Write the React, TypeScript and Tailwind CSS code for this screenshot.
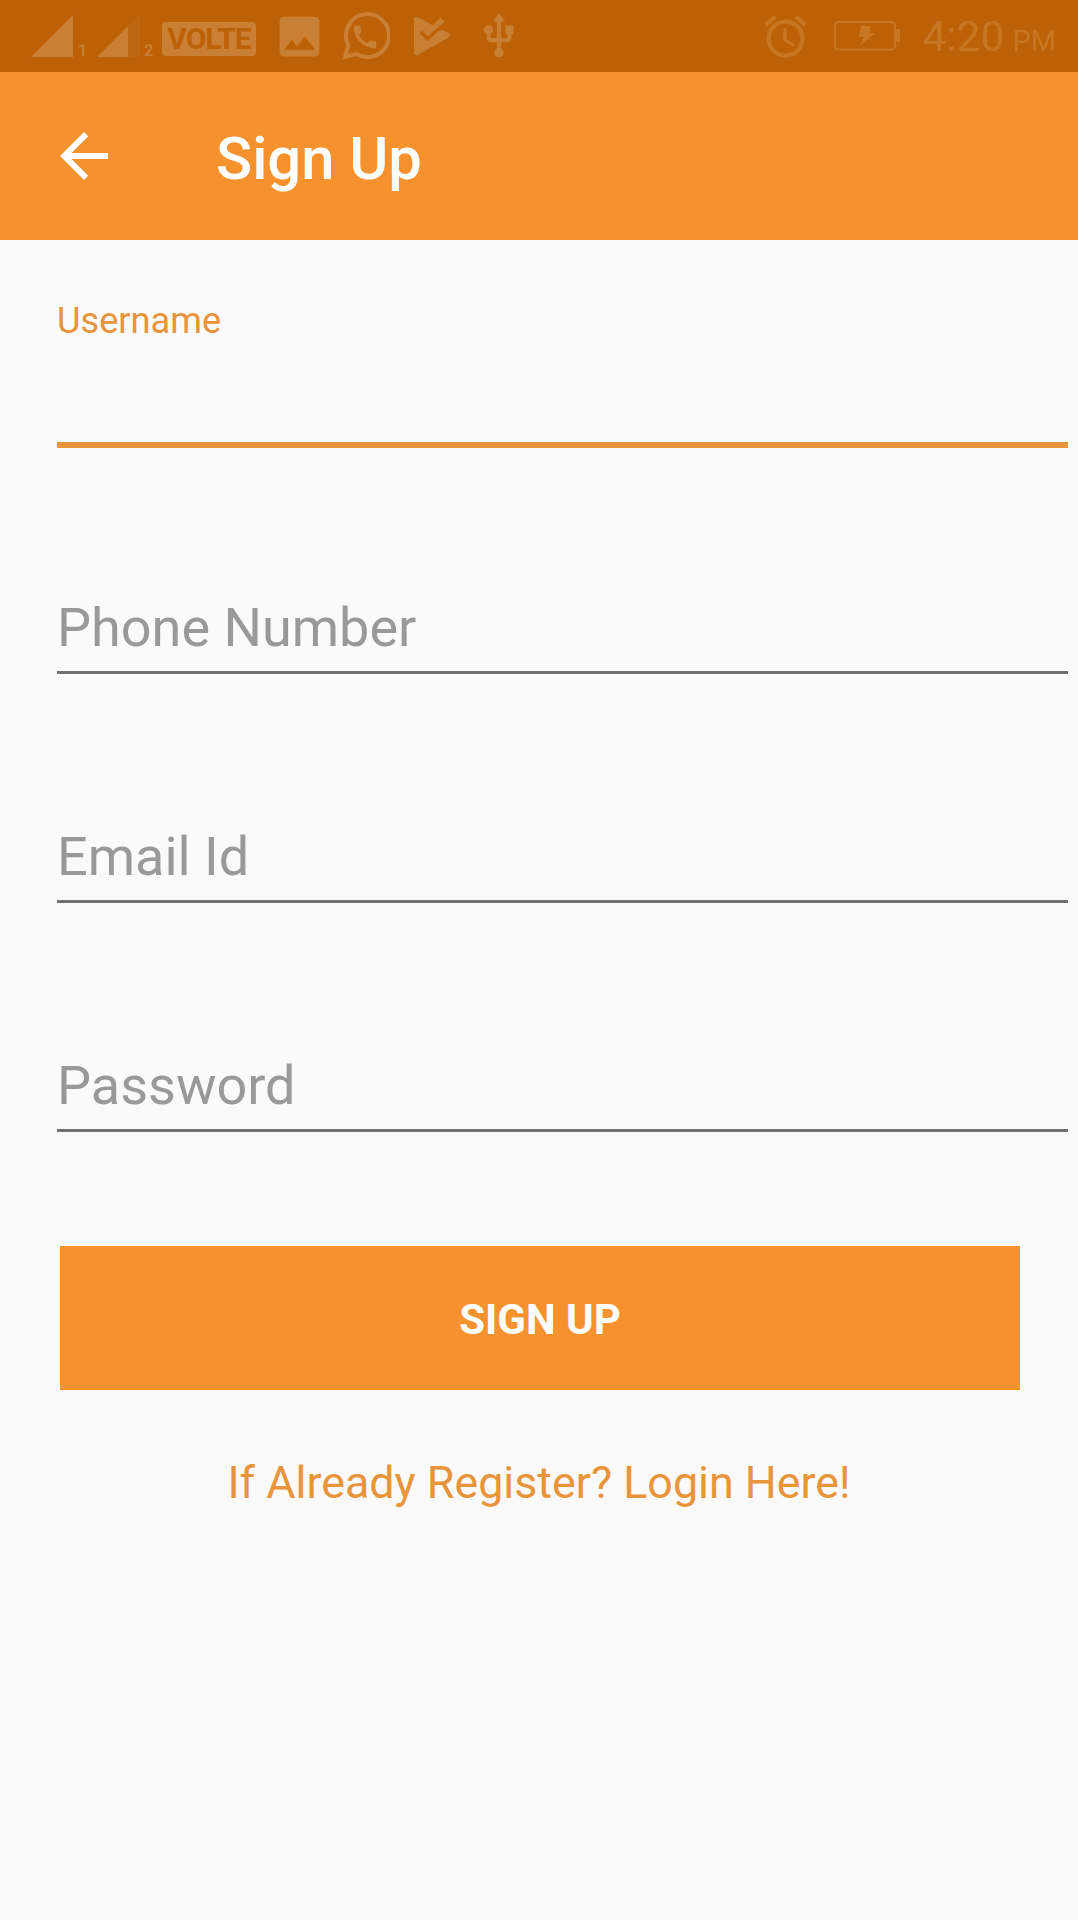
import React from "react"
import { MdAlarm, MdArrowBack, MdCall, MdImage, MdUsb } from "react-icons/md"

interface Field {
  label: string
  height: string
}

const fields: Field[] = [
  { label: "Phone Number", height: "h-[226px]" },
  { label: "Email Id", height: "h-[229px]" },
  { label: "Password", height: "h-[229px]" },
]

function SignalFull() {
  return (
    <svg className="ml-[31px] h-[42px] w-[42px]" viewBox="0 0 42 42" fill="currentColor">
      <path d="M42 0v42H0z" />
    </svg>
  )
}

function SignalPartial() {
  return (
    <svg className="h-[42px] w-[43px]" viewBox="0 0 43 42" fill="currentColor">
      <path d="M43 0v42H0z" opacity="0.2" />
      <path d="M31 11v31H0z" />
    </svg>
  )
}

function WhatsApp() {
  return (
    <span className="relative ml-[16px] block h-[48px] w-[48px]">
      <svg className="h-[48px] w-[48px]" viewBox="0 0 48 48" fill="none" stroke="currentColor" strokeWidth="4">
        <path d="M3 45l3.2-11.8A21.5 21.5 0 1 1 14.3 42z" strokeLinejoin="miter" />
      </svg>
      <MdCall className="absolute top-[10px] left-[8px] h-[30px] w-[30px]" />
    </span>
  )
}

function PlayCheck() {
  return (
    <svg className="ml-[24px] h-[40px] w-[37px]" viewBox="0 0 37 40" fill="none">
      <path d="M0 3.2Q0 .2 4 1.200L18 9l8 5.500 1.500-1 7 3.500Q37.500 19.500 34.500 21.500L4 38.800Q0 40 0 37z" fill="#c98034" />
      <path d="M13 19L28.500 3.500" stroke="#c98034" strokeWidth="5.500" />
      <path d="M7 16l6.500 6.500L27 11" stroke="#bc6105" strokeWidth="3.500" />
    </svg>
  )
}

function Battery() {
  return (
    <svg className="ml-[23px] h-[30px] w-[66px]" viewBox="0 0 66 30" fill="none">
      <rect x="1" y="1" width="60" height="27.500" rx="3.500" stroke="currentColor" strokeWidth="2" />
      <path d="M61 8h5v13h-5z" fill="currentColor" />
      <path d="M27 5h10l-2 7h6L26 25l4-9h-5z" fill="currentColor" />
    </svg>
  )
}

function StatusBar() {
  return (
    <div className="flex h-[72px] items-center bg-[#bc6105] text-[#c98034]">
      <SignalFull />
      <span className="ml-[5px] w-[9px] pt-[30px] text-[16px] leading-none font-bold">1</span>
      <span className="ml-[10px] flex">
        <SignalPartial />
      </span>
      <span className="ml-[4px] w-[9px] pt-[30px] text-[16px] leading-none font-bold">2</span>
      <span className="mt-[6px] ml-[9px] flex h-[34px] w-[94px] items-center justify-center rounded-[4px] bg-[#c98034] text-[30px] leading-none font-bold tracking-[-1px] text-[#bc6105]">
        VOLTE
      </span>
      <MdImage className="ml-[17px] h-[53px] w-[53px]" />
      <WhatsApp />
      <PlayCheck />
      <MdUsb className="ml-[23px] h-[50px] w-[50px]" />
      <div className="ml-auto flex items-center text-[#c97623]">
        <MdAlarm className="h-[51px] w-[51px]" />
        <Battery />
        <span className="mt-[3px] ml-[22px] text-[42.500px] leading-none">4:20</span>
        <span className="mt-[11px] mr-[22px] ml-[8px] text-[29px] leading-none">PM</span>
      </div>
    </div>
  )
}

export default function App() {
  return (
    <div className="flex h-[1920px] w-[1078px] flex-col overflow-hidden bg-[#fafafa] font-['Roboto',sans-serif]">
      <StatusBar />
      <header className="flex h-[168px] items-center bg-[#f5922d] text-white">
        <MdArrowBack className="ml-[48px] h-[72px] w-[72px]" />
        <h1 className="ml-[96px] pt-[5px] text-[59.700px] leading-[70px] font-medium">Sign Up</h1>
      </header>

      <main className="flex flex-col">
        <div className="mr-[10px] ml-[57px] h-[208px] border-b-[6px] border-[#e8943a] pt-[60px]">
          <label className="block text-[36.200px] leading-[42px] text-[#e8943a]">Username</label>
        </div>
        {fields.map(field => (
          <div
            key={field.label}
            className={`mr-[10px] ml-[57px] flex flex-col justify-end border-b-[3px] border-[#707070] pb-[13px] ${field.height}`}
          >
            <label className="block text-[54px] leading-[60px] text-[#999999]">{field.label}</label>
          </div>
        ))}

        <button className="mt-[114px] ml-[60px] h-[144px] w-[960px] bg-[#f5922d] pt-[3px] text-[42px] font-bold text-white">
          SIGN UP
        </button>
        <a className="mt-[66px] text-center text-[44.800px] leading-[54px] text-[#e8943a]">
          If Already Register? Login Here!
        </a>
      </main>
    </div>
  )
}
